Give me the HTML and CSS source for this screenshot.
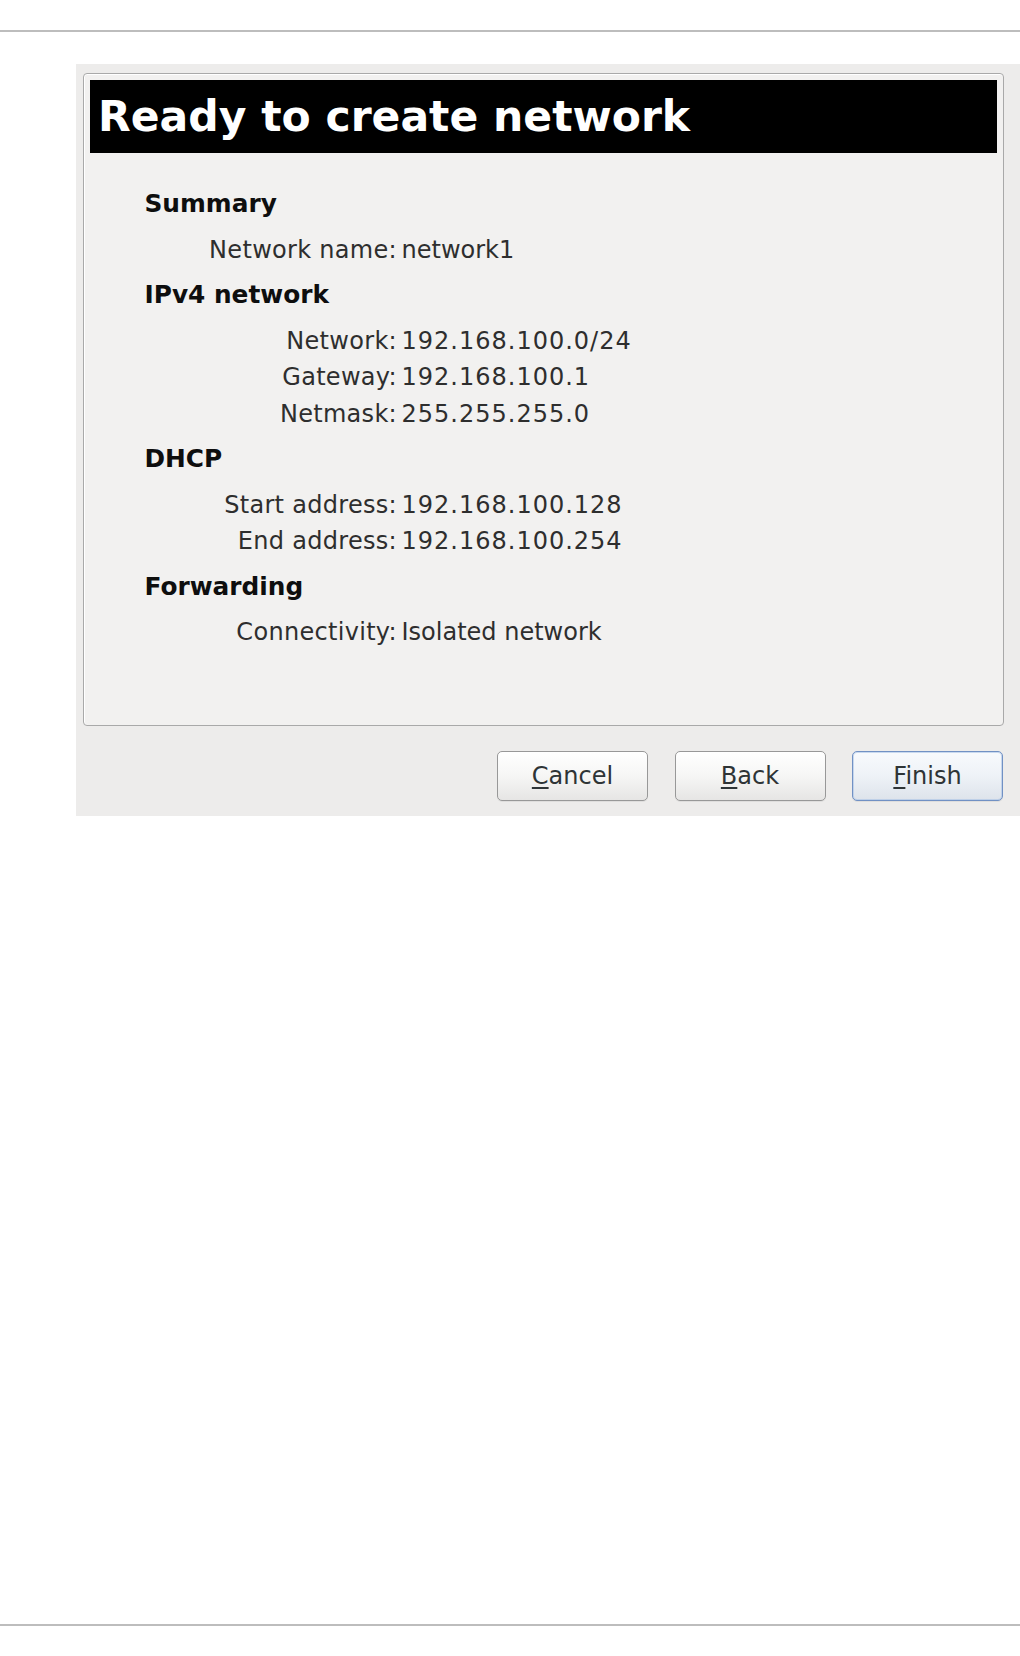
FILE: index.html
```html
<!DOCTYPE html>
<html lang="en">
<head>
<meta charset="utf-8">
<title>Ready to create network</title>
<link rel="stylesheet" href="styles.css">
</head>
<body>
  <div class="rule rule-top"></div>
  <div class="panel">
    <div class="frame">
      <div class="banner">Ready to create network</div>
      <div class="details">
        <div class="section">
          <div class="heading">Summary</div>
          <div class="label">Network name:</div><div class="value">network1</div>
        </div>
        <div class="section">
          <div class="heading">IPv4 network</div>
          <div class="label">Network:</div><div class="value num">192.168.100.0/24</div>
          <div class="label">Gateway:</div><div class="value num">192.168.100.1</div>
          <div class="label">Netmask:</div><div class="value num">255.255.255.0</div>
        </div>
        <div class="section">
          <div class="heading">DHCP</div>
          <div class="label">Start address:</div><div class="value num">192.168.100.128</div>
          <div class="label">End address:</div><div class="value num">192.168.100.254</div>
        </div>
        <div class="section">
          <div class="heading">Forwarding</div>
          <div class="label">Connectivity:</div><div class="value">Isolated network</div>
        </div>
      </div>
    </div>
    <div class="buttons">
      <button class="btn"><u>C</u>ancel</button>
      <button class="btn"><u>B</u>ack</button>
      <button class="btn btn-default"><u>F</u>inish</button>
    </div>
  </div>
  <div class="rule rule-bottom"></div>
</body>
</html>
```

FILE: styles.css
```css
html, body {
  margin: 0;
  padding: 0;
  background: #ffffff;
}

body {
  font-family: "DejaVu Sans", "Liberation Sans", sans-serif;
  color: #2e2e2e;
}

.rule {
  height: 2px;
  background: #bdbdbd;
}

.rule-top {
  margin-top: 30px;
}

.rule-bottom {
  margin-top: 808px;
}

.panel {
  margin-top: 32px;
  margin-left: 76px;
  background: #edeceb;
  padding: 9px 16px 15px 7px;
}

.frame {
  border: 1px solid #a9a9a9;
  border-radius: 4px;
  background: #f2f1f0;
  box-shadow: inset 0 1px 0 #ffffff, inset 1px 0 0 #ffffff;
  padding: 6px 6px 0 6px;
}

.banner {
  background: #000000;
  color: #ffffff;
  font-weight: bold;
  font-size: 42.5px;
  line-height: 49px;
  padding: 12px 8px;
  white-space: nowrap;
}

.details {
  padding: 33px 0 74px 54.5px;
  display: flex;
  flex-direction: column;
  gap: 9px;
}

.section {
  display: grid;
  grid-template-columns: 252.5px auto;
  column-gap: 4.5px;
  justify-content: start;
  font-size: 24px;
  line-height: 36.5px;
}

.heading {
  grid-column: 1 / -1;
  font-weight: bold;
  font-size: 24.8px;
  color: #0e0e0e;
  margin-bottom: 9px;
}

.label {
  text-align: right;
  white-space: nowrap;
  letter-spacing: 0.3px;
}

.value {
  white-space: nowrap;
}

.value.num {
  letter-spacing: 1px;
}

.buttons {
  display: flex;
  justify-content: flex-end;
  gap: 26.5px;
  margin-top: 25px;
  padding-right: 1px;
}

.btn {
  width: 151px;
  height: 50px;
  margin: 0;
  padding: 0;
  border: 1px solid #989898;
  border-radius: 5px;
  background: linear-gradient(to bottom, #ffffff 0%, #f6f6f5 50%, #e6e5e4 100%);
  box-shadow: inset 0 1px 0 #ffffff, 0 1px 0 rgba(0, 0, 0, 0.06);
  font-family: "DejaVu Sans", "Liberation Sans", sans-serif;
  font-size: 24px;
  color: #2e3436;
  line-height: 48px;
  text-align: center;
}

.btn u {
  text-decoration-thickness: 2px;
  text-underline-offset: 3px;
}

.btn-default {
  border-color: #7191c4;
  background: linear-gradient(to bottom, #f8fafd 0%, #eef2f7 50%, #dde3eb 100%);
  box-shadow: inset 0 0 0 1px rgba(170, 195, 230, 0.6), 0 1px 0 rgba(0, 0, 0, 0.06);
}
```
